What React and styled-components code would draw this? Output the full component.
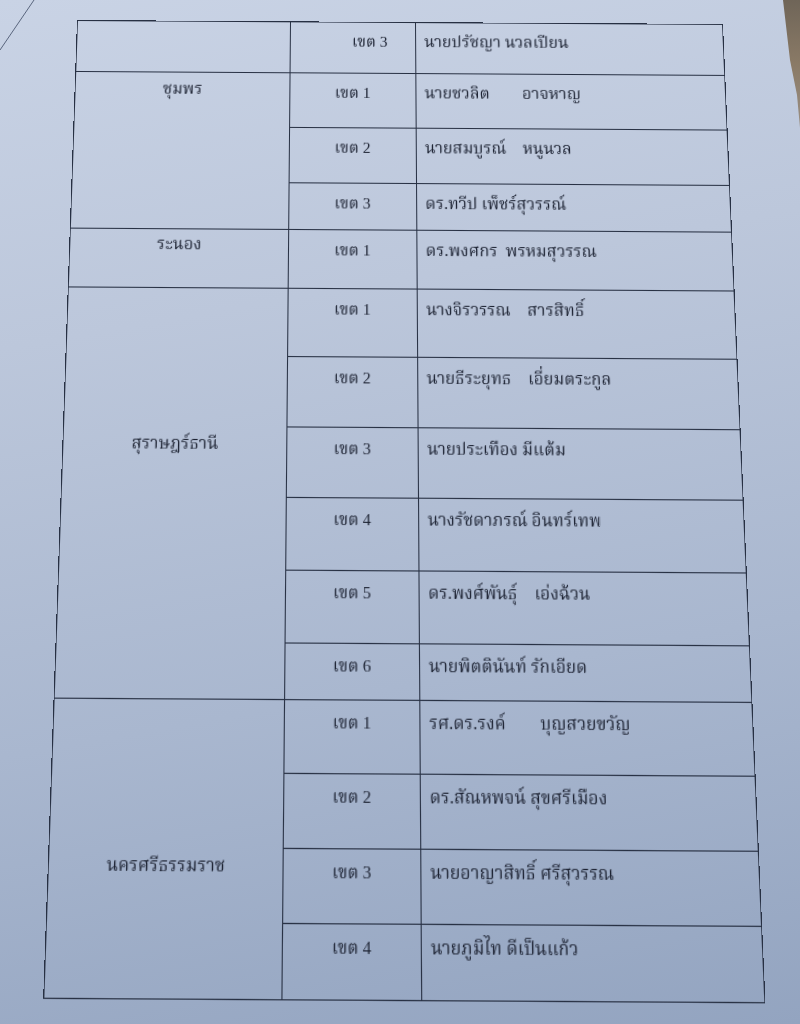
import React from 'react'
import styled, { createGlobalStyle } from 'styled-components'

const GlobalStyle = createGlobalStyle`
	html, body {
		margin: 0;
		padding: 0;
		background: #b3c0d6;
	}
`

const groups = [
	{ province: '', pad: 4, rows: [ { zone: 'เขต 3', name: 'นายปรัชญา นวลเปียน', h: 51, indent: 61 } ] },
	{
		province: 'ชุมพร', pad: 4, rows: [
			{ zone: 'เขต 1', name: 'นายชวลิต        อาจหาญ', h: 54.4 },
			{ zone: 'เขต 2', name: 'นายสมบูรณ์    หนูนวล', h: 53.7 },
			{ zone: 'เขต 3', name: 'ดร.ทวีป เพ็ชร์สุวรรณ์', h: 45.3 },
		],
	},
	{ province: 'ระนอง', pad: 2, rows: [ { zone: 'เขต 1', name: 'ดร.พงศกร  พรหมสุวรรณ', h: 55.2 } ] },
	{
		province: 'สุราษฎร์ธานี', pad: 132, rows: [
			{ zone: 'เขต 1', name: 'นางจิรวรรณ    สารสิทธิ์', h: 64.7 },
			{ zone: 'เขต 2', name: 'นายธีระยุทธ    เอี่ยมตระกูล', h: 64.6 },
			{ zone: 'เขต 3', name: 'นายประเทือง มีแต้ม', h: 64.5 },
			{ zone: 'เขต 4', name: 'นางรัชดาภรณ์ อินทร์เทพ', h: 64.3 },
			{ zone: 'เขต 5', name: 'ดร.พงศ์พันธุ์    เอ่งฉ้วน', h: 64.2 },
			{ zone: 'เขต 6', name: 'นายพิตตินันท์ รักเอียด', h: 49.4 },
		],
	},
	{
		province: 'นครศรีธรรมราช', pad: 128, rows: [
			{ zone: 'เขต 1', name: 'รศ.ดร.รงค์        บุญสวยขวัญ', h: 62.3 },
			{ zone: 'เขต 2', name: 'ดร.สัณหพจน์ สุขศรีเมือง', h: 63.8 },
			{ zone: 'เขต 3', name: 'นายอาญาสิทธิ์ ศรีสุวรรณ', h: 62 },
			{ zone: 'เขต 4', name: 'นายภูมิไท ดีเป็นแก้ว', h: 61.8 },
		],
	},
]

const App = () => {
	function renderRows() {
		return groups.map((group, g) =>
			group.rows.map((row, i) => (
				<Row key={ 'row' + g + '-' + i } $h={ row.h }>
					{ i === 0 && (
						<ProvinceCell rowSpan={ group.rows.length } $pad={ group.pad }>
							{ group.province }
						</ProvinceCell>
					) }
					<ZoneCell $indent={ row.indent || 44 }>{ row.zone }</ZoneCell>
					<NameCell>{ row.name }</NameCell>
				</Row>
			))
		)
	}

	return (
		<Page>
			<GlobalStyle />
			<PaperCorner viewBox="0 0 40 60" preserveAspectRatio="none">
				<path d="M0 50 L34 0" stroke="#3d4a63" strokeWidth="0.8" fill="none" />
			</PaperCorner>
			<Backdrop viewBox="0 0 20 130" preserveAspectRatio="none">
				<defs>
					<linearGradient id="stone" x1="0" y1="0" x2="0" y2="1">
						<stop offset="0" stopColor="#6f6558" />
						<stop offset="0.5" stopColor="#8a7a66" />
						<stop offset="1" stopColor="#9a8f84" />
					</linearGradient>
				</defs>
				<path d="M3 0 L20 0 L20 128 L17 95 L10 60 Z" fill="url(#stone)" />
			</Backdrop>
			<Sheet>
				<Table>
					<colgroup>
						<col style={{ width: 213 }} />
						<col style={{ width: 125 }} />
						<col style={{ width: 307 }} />
					</colgroup>
					<tbody>{ renderRows() }</tbody>
				</Table>
			</Sheet>
		</Page>
	)
}

export default App

const Page = styled.div`
	position: relative;
	width: 800px;
	height: 1024px;
	overflow: hidden;
	background: linear-gradient(170deg, #c9d3e5 0%, #bcc7db 30%, #a9b7cf 65%, #93a4c0 100%);
	font-family: "Liberation Serif", "Norasi", "Kinnari", "TH Sarabun New", "Noto Serif Thai", "Noto Sans Thai", serif;
	color: #1c2232;
`

const PaperCorner = styled.svg`
	position: absolute;
	left: 0;
	top: 0;
	width: 40px;
	height: 60px;
`

const Backdrop = styled.svg`
	position: absolute;
	right: 0;
	top: 0;
	width: 20px;
	height: 130px;
`

const Sheet = styled.div`
	display: flex;
	justify-content: center;
	padding-top: 22px;
`

const Table = styled.table`
	width: 645px;
	table-layout: fixed;
	border-collapse: collapse;
	transform-origin: 50% 0;
	transform: rotate(0.35deg) perspective(1000px) rotateX(6.88deg) skewX(0.6deg);
`

const Row = styled.tr`
	height: ${ p => p.$h }px;
`

const Cell = styled.td`
	border: 1px solid #273043;
	vertical-align: top;
	padding: 7px 0 0 0;
	line-height: 24px;
	font-size: 16px;
	white-space: pre;
	overflow: hidden;
`

const ProvinceCell = styled(Cell)`
	text-align: center;
	padding-top: ${ p => p.$pad }px;
`

const ZoneCell = styled(Cell)`
	padding-left: ${ p => p.$indent }px;
	font-size: 15.5px;
`

const NameCell = styled(Cell)`
	padding-left: 8px;
`
